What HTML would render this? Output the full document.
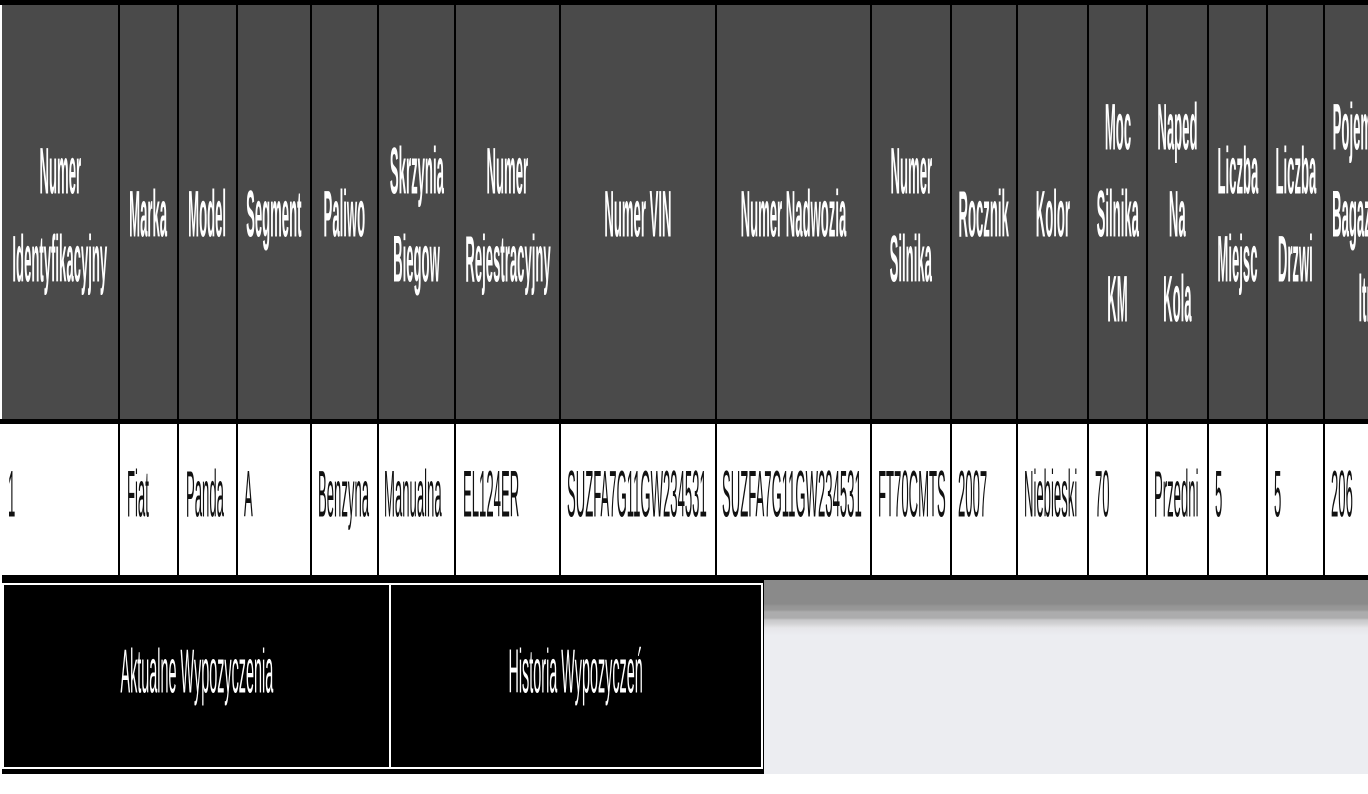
<!DOCTYPE html>
<html><head><meta charset="utf-8"><style>
*{margin:0;padding:0;box-sizing:border-box}
body{width:1368px;height:774px;overflow:hidden;background:#fff;position:relative;font-family:"Liberation Sans",sans-serif}
.a{position:absolute}
.h{position:absolute;top:5px;height:414px;background:#4a4a4a;border-left:2px solid #000}
.b{position:absolute;top:424px;height:151px;background:#fff;border-left:2px solid #000}
.l{position:absolute;height:60px;line-height:60px;text-align:center;white-space:nowrap;overflow:visible}
.l span{display:inline-block;color:#fff;font-weight:bold;font-size:16px;transform:scale(0.82,4.1)}
.t{position:absolute;top:470px;height:60px;line-height:60px;white-space:nowrap}
.t span{display:inline-block;color:#111;font-size:16px;transform:scale(0.82,4.1);transform-origin:left center}
.w{position:absolute;top:647px;height:60px;line-height:60px;text-align:center;white-space:nowrap}
.w span{display:inline-block;color:#fff;font-size:16px;transform:scale(0.9,3.9)}
</style></head><body>
<div class="a" style="left:0;top:0;width:1368px;height:5px;background:#000"></div>
<div class="a" style="left:0;top:419px;width:1368px;height:5px;background:#000"></div>

<div class="h" style="border-left:none;left:2px;width:116px"></div>
<div class="h" style="left:118px;width:59px"></div>
<div class="h" style="left:177px;width:59px"></div>
<div class="h" style="left:236px;width:74px"></div>
<div class="h" style="left:310px;width:67px"></div>
<div class="h" style="left:377px;width:77px"></div>
<div class="h" style="left:454px;width:105px"></div>
<div class="h" style="left:559px;width:156px"></div>
<div class="h" style="left:715px;width:155px"></div>
<div class="h" style="left:870px;width:80px"></div>
<div class="h" style="left:950px;width:66px"></div>
<div class="h" style="left:1016px;width:71px"></div>
<div class="h" style="left:1087px;width:59px"></div>
<div class="h" style="left:1146px;width:61px"></div>
<div class="h" style="left:1207px;width:59px"></div>
<div class="h" style="left:1266px;width:57px"></div>
<div class="h" style="left:1323px;width:80px"></div>

<div class="l" style="left:2px;width:116px;top:147px"><span>Numer</span></div>
<div class="l" style="left:2px;width:116px;top:235px"><span>Identyfikacyjny</span></div>
<div class="l" style="left:120px;width:57px;top:190px"><span>Marka</span></div>
<div class="l" style="left:179px;width:57px;top:190px"><span>Model</span></div>
<div class="l" style="left:238px;width:72px;top:190px"><span>Segment</span></div>
<div class="l" style="left:312px;width:65px;top:190px"><span>Paliwo</span></div>
<div class="l" style="left:379px;width:75px;top:147px"><span>Skrzynia</span></div>
<div class="l" style="left:379px;width:75px;top:235px"><span>Biegow</span></div>
<div class="l" style="left:456px;width:103px;top:147px"><span>Numer</span></div>
<div class="l" style="left:456px;width:103px;top:235px"><span>Rejestracyjny</span></div>
<div class="l" style="left:561px;width:154px;top:190px"><span>Numer VIN</span></div>
<div class="l" style="left:717px;width:153px;top:190px"><span>Numer Nadwozia</span></div>
<div class="l" style="left:872px;width:78px;top:147px"><span>Numer</span></div>
<div class="l" style="left:872px;width:78px;top:235px"><span>Silnika</span></div>
<div class="l" style="left:952px;width:64px;top:190px"><span>Rocznik</span></div>
<div class="l" style="left:1018px;width:69px;top:190px"><span>Kolor</span></div>
<div class="l" style="left:1089px;width:57px;top:103px"><span>Moc</span></div>
<div class="l" style="left:1089px;width:57px;top:190px"><span>Silnika</span></div>
<div class="l" style="left:1089px;width:57px;top:275px"><span>KM</span></div>
<div class="l" style="left:1148px;width:59px;top:103px"><span>Naped</span></div>
<div class="l" style="left:1148px;width:59px;top:190px"><span>Na</span></div>
<div class="l" style="left:1148px;width:59px;top:275px"><span>Kola</span></div>
<div class="l" style="left:1209px;width:57px;top:147px"><span>Liczba</span></div>
<div class="l" style="left:1209px;width:57px;top:235px"><span>Miejsc</span></div>
<div class="l" style="left:1268px;width:55px;top:147px"><span>Liczba</span></div>
<div class="l" style="left:1268px;width:55px;top:235px"><span>Drzwi</span></div>
<div class="l" style="left:1325px;width:80px;top:103px"><span>Pojemnosc</span></div>
<div class="l" style="left:1325px;width:80px;top:190px"><span>Bagaznika</span></div>
<div class="l" style="left:1325px;width:80px;top:275px"><span>ltr</span></div>

<div class="b" style="left:2px;width:116px;border-left:none"></div>
<div class="b" style="left:118px;width:59px"></div>
<div class="b" style="left:177px;width:59px"></div>
<div class="b" style="left:236px;width:74px"></div>
<div class="b" style="left:310px;width:67px"></div>
<div class="b" style="left:377px;width:77px"></div>
<div class="b" style="left:454px;width:105px"></div>
<div class="b" style="left:559px;width:156px"></div>
<div class="b" style="left:715px;width:155px"></div>
<div class="b" style="left:870px;width:80px"></div>
<div class="b" style="left:950px;width:66px"></div>
<div class="b" style="left:1016px;width:71px"></div>
<div class="b" style="left:1087px;width:59px"></div>
<div class="b" style="left:1146px;width:61px"></div>
<div class="b" style="left:1207px;width:59px"></div>
<div class="b" style="left:1266px;width:57px"></div>
<div class="b" style="left:1323px;width:80px"></div>

<div class="t" style="left:8px"><span>1</span></div>
<div class="t" style="left:127px"><span>Fiat</span></div>
<div class="t" style="left:186px"><span>Panda</span></div>
<div class="t" style="left:244px"><span>A</span></div>
<div class="t" style="left:318px"><span>Benzyna</span></div>
<div class="t" style="left:384px"><span>Manualna</span></div>
<div class="t" style="left:463px"><span>EL124ER</span></div>
<div class="t" style="left:567px"><span>SUZFA7G11GW234531</span></div>
<div class="t" style="left:722px"><span>SUZFA7G11GW234531</span></div>
<div class="t" style="left:878px"><span>FT70CMTS</span></div>
<div class="t" style="left:958px"><span>2007</span></div>
<div class="t" style="left:1024px"><span>Niebieski</span></div>
<div class="t" style="left:1095px"><span>70</span></div>
<div class="t" style="left:1154px"><span>Przedni</span></div>
<div class="t" style="left:1215px"><span>5</span></div>
<div class="t" style="left:1274px"><span>5</span></div>
<div class="t" style="left:1331px"><span>206</span></div>

<div class="a" style="left:2px;top:575px;width:1366px;height:5px;background:#000"></div>
<div class="a" style="left:2px;top:580px;width:762px;height:194px;background:#000"></div>
<div class="a" style="left:2px;top:583px;width:761px;height:186px;border:2px solid #fff;background:#000"></div>
<div class="a" style="left:389px;top:585px;width:2px;height:182px;background:#fff"></div>
<div class="w" style="left:4px;width:385px"><span>Aktualne Wypozyczenia</span></div>
<div class="w" style="left:391px;width:370px"><span>Historia Wypozyczeń</span></div>
<div class="a" style="left:764px;top:580px;width:604px;height:194px;background:linear-gradient(#8a8a8a 0,#8a8a8a 24px,#949494 26px,#999 30px,#acacad 32px,#acacad 38px,#c8c8ca 40px,#d4d4d6 44px,#e6e6e9 48px,#ecedf1 56px,#ecedf1 100%)"></div>
</body></html>
